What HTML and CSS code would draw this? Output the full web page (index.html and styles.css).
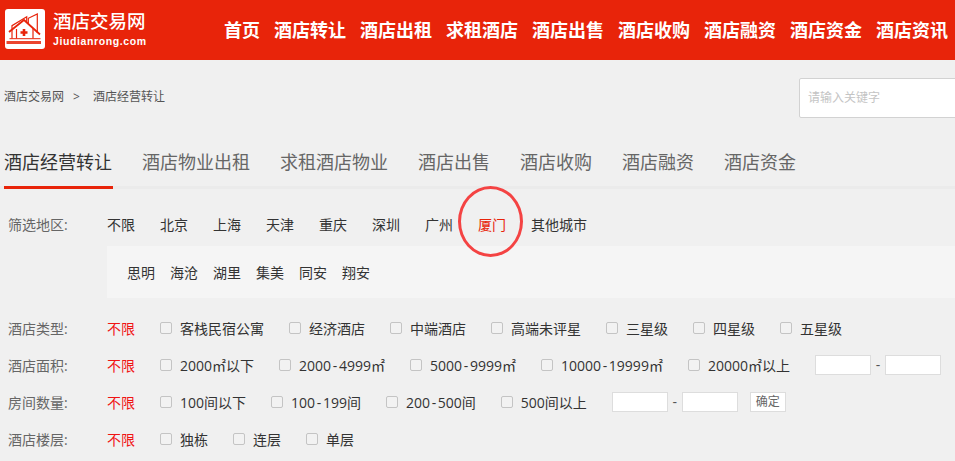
FILE: index.html
```html
<!DOCTYPE html>
<html lang="zh-CN">
<head>
<meta charset="utf-8">
<title>酒店经营转让</title>
<link rel="stylesheet" href="styles.css">
</head>
<body>
<header class="topbar">
  <a class="brand">
    <span class="logo-box">
      <svg width="40" height="40" viewBox="0 0 40 40" fill="none" stroke="#e8240a" stroke-width="1.2">
        <path d="M4 23 L19 11 L35 25.5" stroke-width="1.8"/>
        <path d="M7 29.5 V16.7 L21.7 7.7 V14"/>
        <path d="M23.3 14 V9.3 L32.3 5 V24"/>
        <path d="M11.5 29.5 V20 M28 29.5 V19.5"/>
        <path d="M19 20 v7 M15.5 23.5 h7" stroke-width="2.6"/>
        <path d="M4.5 29.7 H35.5" stroke-width="1"/>
        <rect x="1.5" y="32" width="34.5" height="3" fill="#e8240a" stroke="none" opacity="0.85"/>
      </svg>
    </span>
    <span class="brand-text">
      <span class="brand-cn">酒店交易网</span>
      <span class="brand-en">Jiudianrong.com</span>
    </span>
  </a>
  <nav class="nav">
    <a>首页</a><a>酒店转让</a><a>酒店出租</a><a>求租酒店</a><a>酒店出售</a><a>酒店收购</a><a>酒店融资</a><a>酒店资金</a><a>酒店资讯</a>
  </nav>
</header>

<main class="page">
  <div class="crumb-row">
    <div class="crumbs"><span>酒店交易网</span><span class="sep">&gt;</span><span>酒店经营转让</span></div>
    <div class="search"><span>请输入关键字</span></div>
  </div>

  <div class="tabs">
    <a class="tab active">酒店经营转让</a><a class="tab">酒店物业出租</a><a class="tab">求租酒店物业</a><a class="tab">酒店出售</a><a class="tab">酒店收购</a><a class="tab">酒店融资</a><a class="tab">酒店资金</a>
  </div>

  <section class="region">
    <div class="region-row">
      <span class="label">筛选地区:</span>
      <div class="cities">
        <a>不限</a><a>北京</a><a>上海</a><a>天津</a><a>重庆</a><a>深圳</a><a>广州</a><a class="red">厦门</a><a>其他城市</a>
      </div>
    </div>
    <div class="subareas">
      <a>思明</a><a>海沧</a><a>湖里</a><a>集美</a><a>同安</a><a>翔安</a>
    </div>
    <span class="circle"></span>
  </section>

  <section class="filters">
    <div class="row">
      <span class="label">酒店类型:</span><span class="any">不限</span>
      <label class="opt"><i class="box"></i>客栈民宿公寓</label>
      <label class="opt"><i class="box"></i>经济酒店</label>
      <label class="opt"><i class="box"></i>中端酒店</label>
      <label class="opt"><i class="box"></i>高端未评星</label>
      <label class="opt"><i class="box"></i>三星级</label>
      <label class="opt"><i class="box"></i>四星级</label>
      <label class="opt"><i class="box"></i>五星级</label>
    </div>
    <div class="row">
      <span class="label">酒店面积:</span><span class="any">不限</span>
      <label class="opt"><i class="box"></i>2000㎡以下</label>
      <label class="opt"><i class="box"></i><span>2000<span class="dash">-</span>4999㎡</span></label>
      <label class="opt"><i class="box"></i><span>5000<span class="dash">-</span>9999㎡</span></label>
      <label class="opt"><i class="box"></i><span>10000<span class="dash">-</span>19999㎡</span></label>
      <label class="opt"><i class="box"></i>20000㎡以上</label>
      <span class="range"><i class="field"></i><b>-</b><i class="field"></i></span>
    </div>
    <div class="row">
      <span class="label">房间数量:</span><span class="any">不限</span>
      <label class="opt"><i class="box"></i>100间以下</label>
      <label class="opt"><i class="box"></i><span>100<span class="dash">-</span>199间</span></label>
      <label class="opt"><i class="box"></i><span>200<span class="dash">-</span>500间</span></label>
      <label class="opt"><i class="box"></i>500间以上</label>
      <span class="range"><i class="field"></i><b>-</b><i class="field"></i></span>
      <span class="ok">确定</span>
    </div>
    <div class="row">
      <span class="label">酒店楼层:</span><span class="any">不限</span>
      <label class="opt"><i class="box"></i>独栋</label>
      <label class="opt"><i class="box"></i>连层</label>
      <label class="opt"><i class="box"></i>单层</label>
    </div>
  </section>
</main>
</body>
</html>
```

FILE: styles.css
```css
* { box-sizing: border-box; }
html, body { margin: 0; height: 461px; overflow: hidden; }
body {
  background: #f0f0f0;
  color: #333;
  font-family: "Open Sans", "Noto Sans CJK SC", "Liberation Sans", sans-serif;
  font-size: 14px;
}
a { color: inherit; text-decoration: none; }
i { font-style: normal; }

.topbar {
  height: 60px;
  background: #e8240a;
  display: flex;
  align-items: center;
  padding-left: 5px;
  white-space: nowrap;
}
.brand { display: flex; align-items: center; width: 219px; color: #fff; }
.logo-box {
  width: 40px; height: 40px;
  background: #fff;
  border-radius: 3px;
  margin: -2px 8px 0 0;
  display: block;
}
.logo-box svg { display: block; }
.brand-text { display: flex; flex-direction: column; margin-top: -4px; }
.brand-cn { font-size: 18.5px; line-height: 24px; font-weight: 500; }
.brand-en {
  font-family: "Liberation Sans", sans-serif;
  font-weight: 700;
  font-size: 10.5px;
  letter-spacing: 0.6px;
  line-height: 13px;
  margin-top: 2px;
}
.nav { display: flex; gap: 14px; color: #fff; font-size: 18px; font-weight: 700; line-height: 24px; }

.crumb-row {
  height: 58px;
  margin-top: 18px;
  display: flex;
  justify-content: space-between;
  white-space: nowrap;
}
.crumbs { padding: 10px 0 0 4px; font-size: 12px; line-height: 18px; color: #555; }
.sep { margin: 0 13px 0 9px; }
.search {
  width: 170px; height: 40px;
  margin-right: -14px;
  background: #fff;
  border: 1px solid #d2d2d2;
  border-radius: 2px;
  padding-left: 8px;
  font-size: 12px;
  line-height: 38px;
  color: #c4c4c4;
}

.tabs {
  height: 53px;
  padding-left: 4px;
  display: flex;
  gap: 30px;
  border-bottom: 3px solid #ebebeb;
  font-size: 18px;
  line-height: 52px;
  color: #666;
  white-space: nowrap;
}
.tab { height: 53px; }
.tab.active { width: 109px; margin-right: -1px; color: #333; border-bottom: 3px solid #e8240a; }

.label { width: 107px; flex: none; padding-left: 8px; color: #666; font-size: 14px; }

.region { position: relative; padding-top: 21px; }
.region-row { display: flex; align-items: center; height: 28px; }
.cities { display: flex; gap: 25px; color: #333; font-size: 14px; white-space: nowrap; }
.red { color: #e8240a; }
.subareas {
  margin: 8px 0 0 107px;
  height: 52px;
  background: #f5f5f5;
  padding-left: 20px;
  display: flex;
  align-items: center;
  gap: 15px;
  white-space: nowrap;
}
.circle {
  position: absolute;
  left: 458px; top: -3px;
  width: 65px; height: 71px;
  border: 3px solid #f44343;
  border-radius: 50%;
}

.filters { margin-top: 11px; }
.row { display: flex; align-items: center; height: 37px; white-space: nowrap; }
.any { width: 53px; color: #f01414; flex: none; }
.opt { display: flex; align-items: center; margin-right: 25px; }
.dash { margin: 0 1.7px; }
.box {
  flex: none;
  width: 12px; height: 12px;
  margin-right: 8px;
  border: 1px solid #c4c4c4;
  border-radius: 2px;
  background: #f2f2f2;
}
.range { display: flex; align-items: center; }
.range b { width: 14px; text-align: center; font-weight: 400; color: #555; }
.field {
  width: 56px; height: 20px;
  background: #fff;
  border: 1px solid #ddd;
}
.ok {
  margin-left: 12px;
  width: 36px; height: 20px;
  background: #fff;
  border: 1px solid #ddd;
  font-size: 12px;
  line-height: 18px;
  text-align: center;
  color: #666;
}
```
